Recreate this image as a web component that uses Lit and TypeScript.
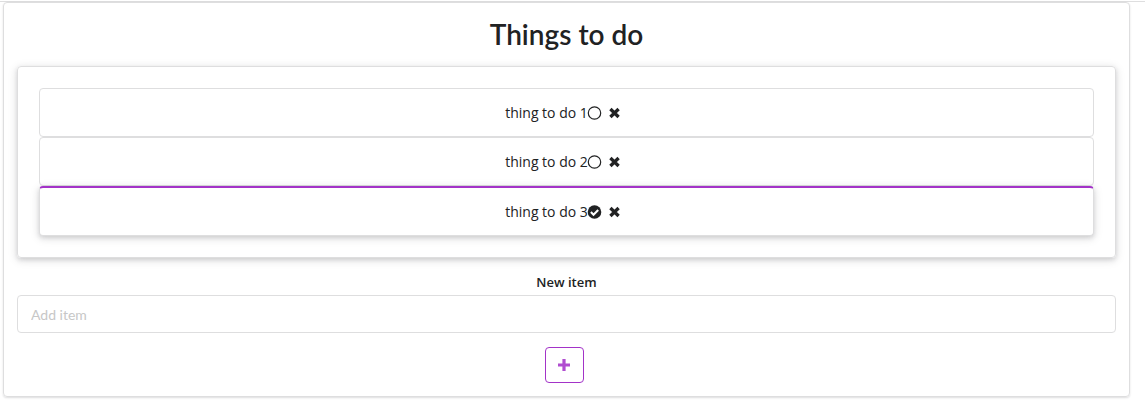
import { LitElement, html, css, svg } from "lit";
import { customElement, state } from "lit/decorators.js";

interface Todo {
  id: number;
  text: string;
  done: boolean;
}

const circleOutline = svg`<circle cx="6.5" cy="8" r="6.2" fill="none" stroke="currentColor" stroke-width="1.2" />`;
const checkCircle = svg`
  <circle cx="6.5" cy="8" r="6.8" fill="currentColor" />
  <path d="M2.9 8.1 L5.5 10.7 L10.2 6" fill="none" stroke="#fff" stroke-width="2.1" />`;
const cross = svg`<path d="M2.4 4 L10.6 12 M10.6 4 L2.4 12" fill="none" stroke="currentColor" stroke-width="3.3" />`;
const plus = svg`<path d="M7 2 V14 M1 8 H13" fill="none" stroke="currentColor" stroke-width="3.2" />`;

@customElement("app-root")
export class AppRoot extends LitElement {
  static styles = css`
    :host {
      display: block;
      padding: 1px 15px 8px 0;
      color: #212223;
      background: #fff;
      font: 14px/19px "Open Sans", "Noto Sans", sans-serif;
    }
    * {
      box-sizing: border-box;
    }
    .rule {
      height: 1px;
      margin-right: -15px;
      background: #dededf;
    }
    .card {
      display: flex;
      flex-direction: column;
      margin-left: 3px;
      padding: 13px;
      border: 1px solid #dededf;
      border-radius: 4px;
      box-shadow: 0 1px 2px 0 rgba(34, 36, 38, 0.15);
    }
    .title {
      margin: 0 0 14px;
      font: 600 28px/36px Lato, sans-serif;
      text-align: center;
    }
    .panel,
    .raised {
      box-shadow:
        0 2px 4px 0 rgba(34, 36, 38, 0.12),
        0 2px 10px 0 rgba(34, 36, 38, 0.15);
    }
    .panel {
      margin: 0 0 14px;
      padding: 21px;
      border: 1px solid #dededf;
      border-radius: 4px;
      list-style: none;
    }
    .item {
      display: flex;
      justify-content: center;
      align-items: center;
      padding: 14px;
      border: 1px solid #dededf;
      border-radius: 4px;
      background: #fff;
    }
    .raised {
      border-top: 2px solid #a333c8;
    }
    .icon {
      width: 16px;
      margin: 0 4px 0 0;
      padding: 0;
      border: 0;
      background: none;
      color: inherit;
      cursor: pointer;
    }
    svg {
      display: block;
      width: 14px;
      height: 16px;
    }
    .form {
      display: flex;
      flex-direction: column;
      align-items: center;
    }
    .label {
      padding-top: 1px;
      margin-bottom: 3px;
      font-size: 13px;
      font-weight: 600;
    }
    .input {
      width: 100%;
      height: 38px;
      margin-bottom: 14px;
      padding: 0 13px;
      border: 1px solid #dededf;
      border-radius: 4px;
      outline: 0;
      background: #fff;
      color: #212223;
      font: 14px/17px Lato, sans-serif;
    }
    .input::placeholder {
      color: #c7c7c7;
      opacity: 1;
    }
    .add {
      display: flex;
      align-items: center;
      justify-content: center;
      width: 39px;
      height: 36px;
      margin: 0 4px 0 0;
      padding: 0 1px 0 0;
      border: 1px solid #a333c8;
      border-radius: 4px;
      background: #fff;
      color: #b04dd0;
      cursor: pointer;
    }
  `;

  @state() private items: Todo[] = [
    { id: 1, text: "thing to do 1", done: false },
    { id: 2, text: "thing to do 2", done: false },
    { id: 3, text: "thing to do 3", done: true },
  ];

  private toggle(id: number) {
    this.items = this.items.map((t) => (t.id === id ? { ...t, done: !t.done } : t));
  }

  private remove(id: number) {
    this.items = this.items.filter((t) => t.id !== id);
  }

  private add(e: Event) {
    e.preventDefault();
    const input = this.renderRoot.querySelector("input")!;
    const text = input.value.trim();
    if (!text) return;
    this.items = [...this.items, { id: Date.now(), text, done: false }];
    input.value = "";
  }

  private glyph(shape: unknown) {
    return html`<svg viewBox="0 0 14 16" overflow="visible" aria-hidden="true">${shape}</svg>`;
  }

  render() {
    return html`
      <div class="rule"></div>
      <main class="card">
        <h1 class="title">Things to do</h1>
        <ul class="panel">
          ${this.items.map(
            (t) => html`
              <li class="item ${t.done ? "raised" : ""}">
                <span>${t.text}</span>
                <button class="icon" type="button" aria-label="Toggle done" @click=${() => this.toggle(t.id)}>
                  ${this.glyph(t.done ? checkCircle : circleOutline)}
                </button>
                <button class="icon" type="button" aria-label="Remove" @click=${() => this.remove(t.id)}>
                  ${this.glyph(cross)}
                </button>
              </li>
            `
          )}
        </ul>
        <form class="form" @submit=${this.add}>
          <label class="label" for="new-item">New item</label>
          <input class="input" id="new-item" type="text" placeholder="Add item" />
          <button class="add" type="submit" aria-label="Add">${this.glyph(plus)}</button>
        </form>
      </main>
    `;
  }
}
